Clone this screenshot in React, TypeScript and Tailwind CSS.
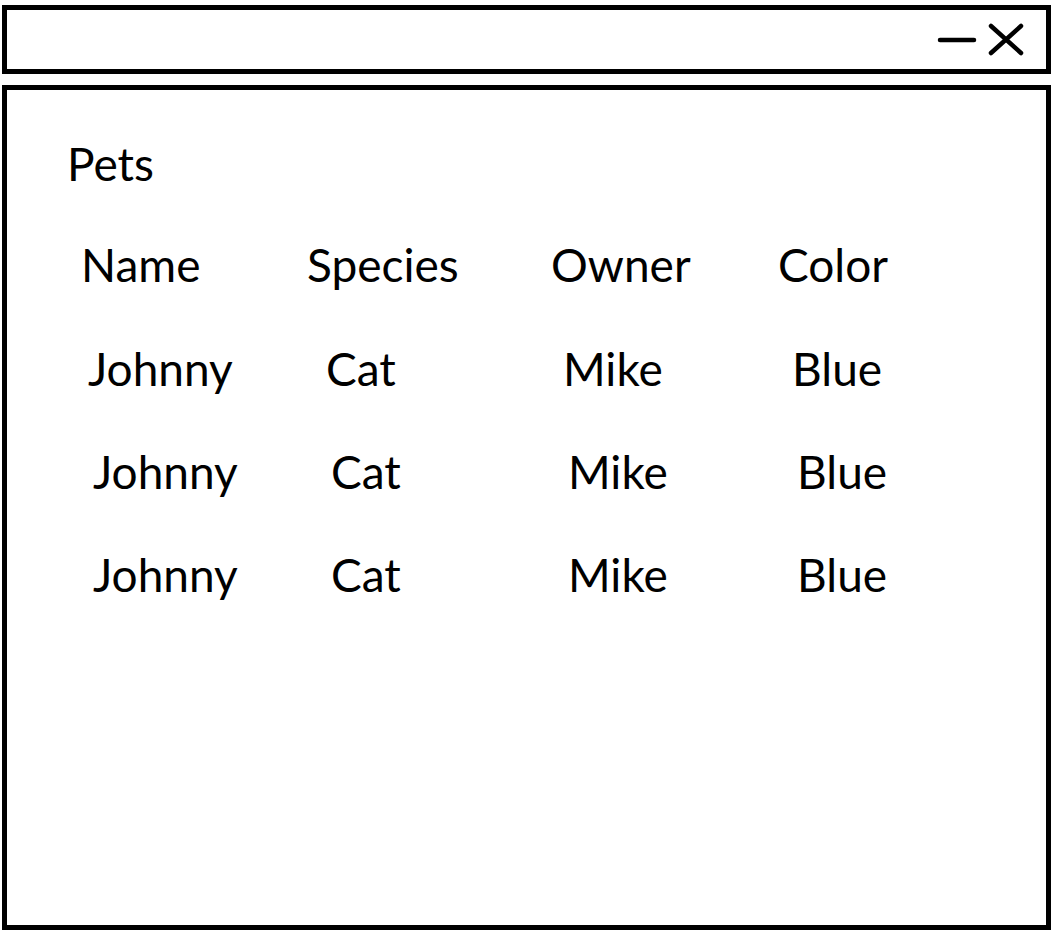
import React from 'react';

const rows = [
  { name: 'Johnny', species: 'Cat', owner: 'Mike', color: 'Blue', shift: 'pl-[81px]' },
  { name: 'Johnny', species: 'Cat', owner: 'Mike', color: 'Blue', shift: 'pl-[86px]' },
  { name: 'Johnny', species: 'Cat', owner: 'Mike', color: 'Blue', shift: 'pl-[86px]' },
];

const App: React.FC = () => {
  return (
    <div className="w-[1057px] h-[941px] bg-white text-black pt-[5px] pl-[2px] font-['Lato',sans-serif]">
      {/* window title bar */}
      <div className="w-[1049px] h-[69px] border-[5px] border-black flex items-center justify-end pr-[20px]">
        <svg width="90" height="36" viewBox="0 0 90 36" fill="none" stroke="black" strokeWidth="4.5" strokeLinecap="round">
          <line x1="4" y1="18" x2="38" y2="18" />
          <line x1="55" y1="4" x2="85" y2="31" />
          <line x1="85" y1="4" x2="55" y2="31" />
        </svg>
      </div>

      {/* window body */}
      <div className="w-[1049px] h-[845px] mt-[11px] border-[5px] border-black pt-[51px] text-[46px] leading-none">
        <h1 className="pl-[60px]">Pets</h1>

        <div className="grid grid-cols-[226px_244px_227px_auto] pl-[74px] mt-[55px]">
          <span>Name</span>
          <span>Species</span>
          <span>Owner</span>
          <span>Color</span>
        </div>

        <div className="flex flex-col gap-[57px] mt-[58px]">
          {rows.map((r, i) => (
            <div key={i} className={`grid grid-cols-[238px_237px_229px_auto] ${r.shift}`}>
              <span>{r.name}</span>
              <span>{r.species}</span>
              <span>{r.owner}</span>
              <span>{r.color}</span>
            </div>
          ))}
        </div>
      </div>
    </div>
  );
};

export default App;
